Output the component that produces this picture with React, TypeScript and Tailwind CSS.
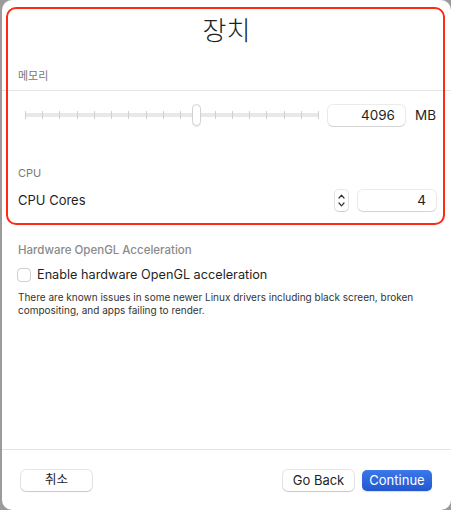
import React from 'react';

const font = { fontFamily: 'Inter, "Noto Sans CJK KR", sans-serif' };

const Slider = () => {
  const ticks = Array.from({ length: 18 });
  return (
    <div className="relative h-[22px] w-[294px]">
      <div className="absolute left-0 right-0 top-[9px] h-[4px] rounded-full bg-[#e8e8e8]" />
      <div className="absolute inset-x-0 top-[7px] flex h-[8px] justify-between">
        {ticks.map((_, i) => (
          <div key={i} className="h-full w-px bg-[#cfcfcf]" />
        ))}
      </div>
      <div className="absolute left-[167px] top-0 h-[22px] w-[9px] rounded-full border border-[#d2d2d2] bg-white shadow-[0_1px_1px_rgba(0,0,0,0.08)]" />
    </div>
  );
};

const Field = ({ value, width }: { value: string; width: string }) => (
  <div
    className={`flex h-[21px] ${width} items-center justify-end rounded-[5px] bg-white pr-[10px] text-[13.5px] text-[#1f1f1f] shadow-[0_0_0_1px_rgba(0,0,0,0.08),0_1px_1px_rgba(0,0,0,0.1)]`}
  >
    {value}
  </div>
);

const Stepper = () => (
  <div className="flex h-[21px] w-[13px] flex-col items-center justify-center rounded-[4px] bg-white shadow-[0_0_0_1px_rgba(0,0,0,0.1),0_1px_1px_rgba(0,0,0,0.1)]">
    <svg width="7" height="5" viewBox="0 0 7 5" className="mb-[3px]">
      <path d="M1 4 L3.5 1.2 L6 4" fill="none" stroke="#333" strokeWidth="1.2" strokeLinecap="round" strokeLinejoin="round" />
    </svg>
    <svg width="7" height="5" viewBox="0 0 7 5">
      <path d="M1 1 L3.5 3.8 L6 1" fill="none" stroke="#333" strokeWidth="1.2" strokeLinecap="round" strokeLinejoin="round" />
    </svg>
  </div>
);

export default function App() {
  return (
    <div className="h-[510px] w-[451px] overflow-hidden bg-[#9b9b9b]" style={font}>
      <div className="relative ml-[2px] flex h-[510px] w-[449px] flex-col rounded-[10px] bg-white">
        {/* annotation box */}
        <div className="pointer-events-none absolute left-[4px] top-[7px] h-[218px] w-[439px] rounded-[10px] border-2 border-[#ff2a14]" />

        <h1 className="mt-[15px] text-center text-[26px] font-light leading-[32px] text-[#222]">장치</h1>

        <div className="mt-[22px] px-[16px] text-[11px] leading-[14px] text-[#777]">메모리</div>
        <div className="mt-[7px] h-px bg-[#e4e4e4]" />

        <div className="mt-[13px] flex h-[22px] items-center pl-[23px]">
          <Slider />
          <div className="ml-[9px]">
            <Field value="4096" width="w-[77px]" />
          </div>
          <span className="ml-[10px] text-[13.5px] text-[#1f1f1f]">MB</span>
        </div>

        <div className="mt-[40px] px-[16px] text-[11px] leading-[14px] text-[#7a7a7a]">CPU</div>

        <div className="mt-[10px] flex h-[21px] items-center pl-[16px] pr-[15px]">
          <span className="text-[13px] text-[#1f1f1f]">CPU Cores</span>
          <div className="ml-auto">
            <Stepper />
          </div>
          <div className="ml-[10px]">
            <Field value="4" width="w-[78px]" />
          </div>
        </div>

        <div className="mt-[32px] px-[16px] text-[11.5px] font-medium leading-[14px] text-[#8a8a8a]">
          Hardware OpenGL Acceleration
        </div>

        <label className="mt-[10px] flex h-[16px] items-center gap-[6px] pl-[15px]">
          <span className="h-[14px] w-[14px] rounded-[4px] border border-[#cfcfcf] bg-white" />
          <span className="text-[12.7px] text-[#1f1f1f]">Enable hardware OpenGL acceleration</span>
        </label>

        <p className="mt-[8px] pl-[16px] pr-[20px] text-[10px] leading-[13px] text-[#333]">
          There are known issues in some newer Linux drivers including black screen, broken compositing, and apps
          failing to render.
        </p>

        <div className="flex-1" />
        <div className="h-px bg-[#e4e4e4]" />

        <div className="flex h-[60px] items-start pt-[20px] pl-[19px] pr-[19px]">
          <button className="h-[21px] w-[71px] rounded-[5px] bg-white text-[12.5px] text-[#1f1f1f] shadow-[0_0_0_1px_rgba(0,0,0,0.1),0_1px_1px_rgba(0,0,0,0.12)]">
            취소
          </button>
          <div className="flex-1" />
          <button className="h-[21px] w-[71px] rounded-[5px] bg-white text-[13px] text-[#1f1f1f] shadow-[0_0_0_1px_rgba(0,0,0,0.1),0_1px_1px_rgba(0,0,0,0.12)]">
            Go Back
          </button>
          <button className="ml-[8px] h-[21px] w-[70px] rounded-[5px] bg-gradient-to-b from-[#3b78ea] to-[#2257cf] text-[13px] text-white shadow-[0_1px_1px_rgba(0,0,0,0.15)]">
            Continue
          </button>
        </div>
      </div>
    </div>
  );
}
